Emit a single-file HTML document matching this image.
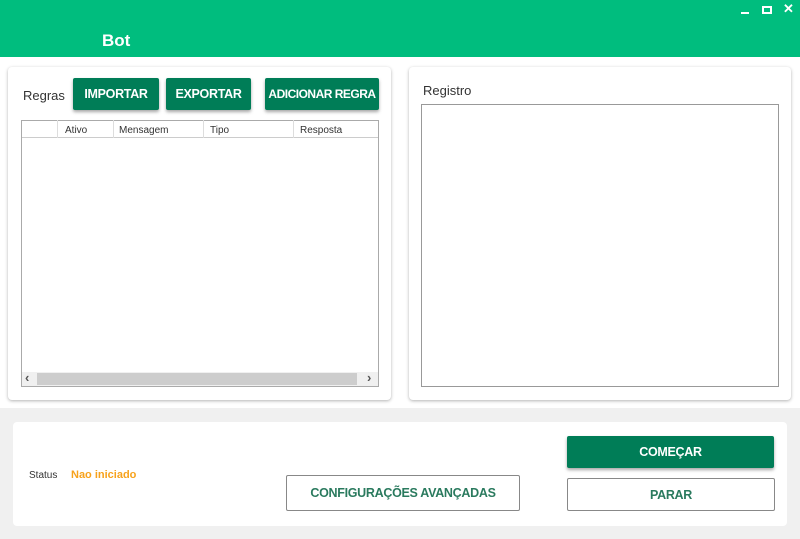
<!DOCTYPE html>
<html><head><meta charset="utf-8"><style>
*{box-sizing:border-box;margin:0;padding:0}
body{width:800px;height:539px;background:#f0f0f0;font-family:"Liberation Sans",sans-serif;position:relative;overflow:hidden}
.a{position:absolute}
.hdr{left:0;top:0;width:800px;height:57px;background:#00bd7e}
.card{background:#fff;border-radius:4px;box-shadow:0 1px 3px rgba(0,0,0,.3)}
.btn{background:#007d57;color:#fff;font-weight:bold;font-size:12.5px;letter-spacing:-0.3px;white-space:nowrap;display:flex;align-items:center;justify-content:center;border-radius:2px;box-shadow:0 2px 3px rgba(0,0,0,.35)}
.ob{border:1px solid #888;color:#2a7a5e;font-weight:bold;font-size:12.5px;letter-spacing:-0.3px;display:flex;align-items:center;justify-content:center;border-radius:2px;background:#fff}
.th{font-size:10px;color:#333;top:125px}
.vl{width:1px;height:18px;top:120px;background:#ddd}
</style></head><body>
<div class="a hdr"></div>
<div class="a" style="left:102px;top:31px;color:#fff;font-weight:bold;font-size:17px">Bot</div>
<div class="a" style="left:741px;top:12px;width:8px;height:2px;background:#fff"></div>
<div class="a" style="left:762px;top:6px;width:10px;height:8px;border:2px solid #fff"></div>
<div class="a" style="left:783px;top:1px;color:#fff;font-weight:bold;font-size:13px">✕</div>
<div class="a" style="left:0;top:57px;width:800px;height:351px;background:#fff"></div>
<div class="a card" style="left:8px;top:67px;width:383px;height:333px"></div>
<div class="a card" style="left:409px;top:67px;width:382px;height:333px"></div>
<div class="a" style="left:23px;top:88px;font-size:13px;color:#333">Regras</div>
<div class="a btn" style="left:73px;top:78px;width:86px;height:32px">IMPORTAR</div>
<div class="a btn" style="left:166px;top:78px;width:85px;height:32px">EXPORTAR</div>
<div class="a btn" style="left:265px;top:78px;width:114px;height:32px;font-size:12px;letter-spacing:-0.5px">ADICIONAR REGRA</div>
<div class="a" style="left:21px;top:120px;width:358px;height:267px;border:1px solid #aaa;background:#fff"></div>
<div class="a" style="left:22px;top:121px;width:356px;height:17px;border-bottom:1px solid #ccc"></div>
<div class="a vl" style="left:57px"></div><div class="a vl" style="left:113px"></div><div class="a vl" style="left:203px"></div><div class="a vl" style="left:293px"></div>
<div class="a th" style="left:65px">Ativo</div>
<div class="a th" style="left:119px">Mensagem</div>
<div class="a th" style="left:210px">Tipo</div>
<div class="a th" style="left:300px">Resposta</div>
<div class="a" style="left:22px;top:372px;width:356px;height:14px;background:#f0f0f0"></div>
<div class="a" style="left:37px;top:373px;width:320px;height:12px;background:#cdcdcd"></div>
<div class="a" style="left:25px;top:370px;font-size:13px;font-weight:bold;color:#555">‹</div>
<div class="a" style="left:367px;top:370px;font-size:13px;font-weight:bold;color:#555">›</div>
<div class="a" style="left:423px;top:83px;font-size:13px;color:#333">Registro</div>
<div class="a" style="left:421px;top:104px;width:358px;height:283px;border:1px solid #999"></div>
<div class="a" style="left:13px;top:422px;width:774px;height:104px;background:#fff;border-radius:4px"></div>
<div class="a" style="left:29px;top:470px;font-size:10px;color:#333">Status</div>
<div class="a" style="left:71px;top:469px;font-size:11px;font-weight:bold;color:#f7a21b">Nao iniciado</div>
<div class="a ob" style="left:286px;top:475px;width:234px;height:36px">CONFIGURAÇÕES AVANÇADAS</div>
<div class="a btn" style="left:567px;top:436px;width:207px;height:32px">COMEÇAR</div>
<div class="a ob" style="left:567px;top:478px;width:208px;height:33px">PARAR</div>
</body></html>
